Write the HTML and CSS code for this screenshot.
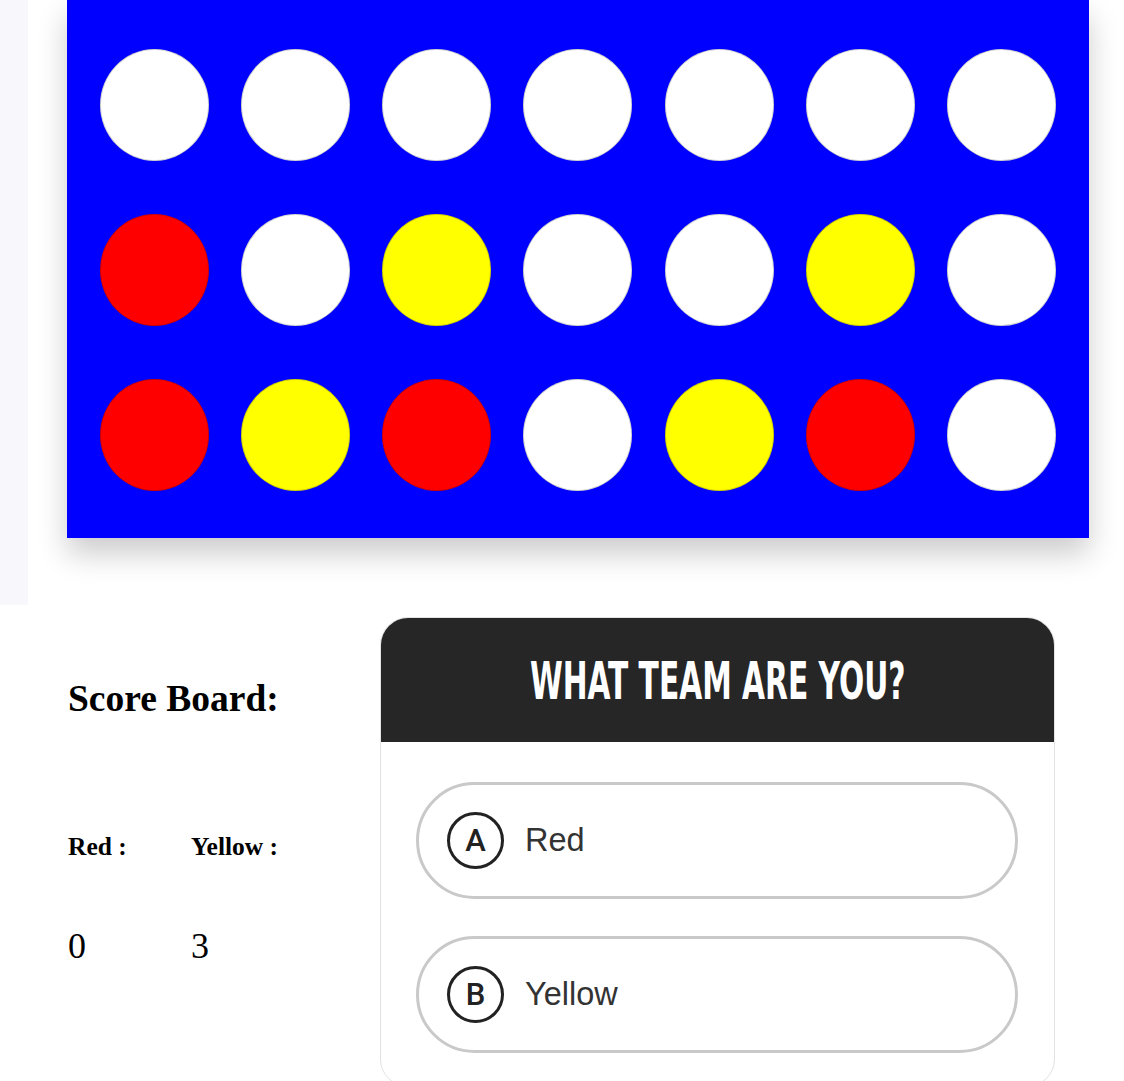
FILE: index.html
```html
<!DOCTYPE html>
<html>
<head>
<meta charset="utf-8">
<link rel="stylesheet" href="styles.css">
</head>
<body>
<div class="page">
  <div class="sidebar"></div>
  <div class="main">
    <div class="board">
      <div class="cell"></div><div class="cell"></div><div class="cell"></div><div class="cell"></div><div class="cell"></div><div class="cell"></div><div class="cell"></div>
      <div class="cell red"></div><div class="cell"></div><div class="cell yellow"></div><div class="cell"></div><div class="cell"></div><div class="cell yellow"></div><div class="cell"></div>
      <div class="cell red"></div><div class="cell yellow"></div><div class="cell red"></div><div class="cell"></div><div class="cell yellow"></div><div class="cell red"></div><div class="cell"></div>
    </div>
    <div class="bottom">
      <div class="score">
        <h2 class="score-title">Score Board:</h2>
        <div class="score-grid">
          <div class="score-label">Red :</div>
          <div class="score-label">Yellow :</div>
          <div class="score-value">0</div>
          <div class="score-value">3</div>
        </div>
      </div>
      <div class="card">
        <div class="card-head"><span class="card-title">WHAT TEAM ARE YOU?</span></div>
        <div class="card-body">
          <div class="option"><span class="letter">A</span><span class="option-text">Red</span></div>
          <div class="option"><span class="letter">B</span><span class="option-text">Yellow</span></div>
        </div>
      </div>
    </div>
  </div>
</div>
</body>
</html>
```
FILE: styles.css
```css
html, body {
  margin: 0;
  padding: 0;
  background: #ffffff;
}
body {
  font-family: "Liberation Serif", "Times New Roman", serif;
  overflow: hidden;
  height: 1081px;
}
.page {
  display: flex;
  align-items: flex-start;
}
.sidebar {
  width: 28px;
  height: 605px;
  background: #f8f8fc;
  flex: none;
}
.main {
  margin-left: 39px;
  width: 1022px;
  flex: none;
}
.board {
  background: #0000ff;
  padding: 49px 33px 47px 33px;
  display: grid;
  grid-template-columns: repeat(7, 109px);
  justify-content: space-between;
  row-gap: 53px;
  box-shadow: 0 16px 28px rgba(0, 0, 0, 0.2);
}
.cell {
  width: 109px;
  height: 112px;
  border-radius: 50%;
  background: #ffffff;
  box-sizing: border-box;
  border: 1px solid rgba(0, 0, 0, 0.18);
}
.cell.red { background: #ff0000; }
.cell.yellow { background: #ffff00; }

.bottom {
  display: flex;
  margin-top: 79px;
}
.score {
  width: 312px;
  padding-left: 1px;
  flex: none;
  color: #000;
}
.score-title {
  margin: 62px 0 0 0;
  font-size: 37.5px;
  line-height: 40px;
  font-weight: bold;
}
.score-grid {
  display: grid;
  grid-template-columns: 123px auto;
  margin-top: 114px;
}
.score-label {
  font-size: 25.5px;
  line-height: 28px;
  font-weight: bold;
}
.score-value {
  font-size: 36px;
  line-height: 40px;
  margin-top: 65px;
}
.card {
  width: 675px;
  flex: none;
  border-radius: 28px;
  border: 1px solid #e2e2e2;
  box-sizing: border-box;
  overflow: hidden;
  height: 470px;
}
.card-head {
  height: 123px;
  background: #262626;
  display: flex;
  align-items: center;
  justify-content: center;
  margin: -1px -1px 0 -1px;
  padding-top: 2px;
}
.card-title {
  display: inline-block;
  color: #ffffff;
  font-family: "DejaVu Sans Condensed", "DejaVu Sans", sans-serif;
  font-stretch: condensed;
  font-weight: bold;
  font-size: 52px;
  line-height: 60px;
  white-space: nowrap;
  transform: scaleX(0.635);
}
.card-body {
  padding: 40px 36px 30px 35px;
  display: flex;
  flex-direction: column;
  gap: 37px;
}
.option {
  height: 117px;
  box-sizing: border-box;
  border: 3px solid #c9c9c9;
  border-radius: 60px;
  display: flex;
  align-items: center;
  padding-left: 28px;
}
.letter {
  width: 57px;
  height: 57px;
  box-sizing: border-box;
  border: 3px solid #222222;
  border-radius: 50%;
  display: flex;
  align-items: center;
  justify-content: center;
  font-family: Roboto, "Liberation Sans", Arial, sans-serif;
  font-size: 31px;
  font-weight: 500;
  color: #222222;
  flex: none;
}
.option-text {
  margin-left: 21px;
  font-family: "Liberation Sans", Arial, sans-serif;
  font-size: 32.5px;
  color: #333333;
}
```
